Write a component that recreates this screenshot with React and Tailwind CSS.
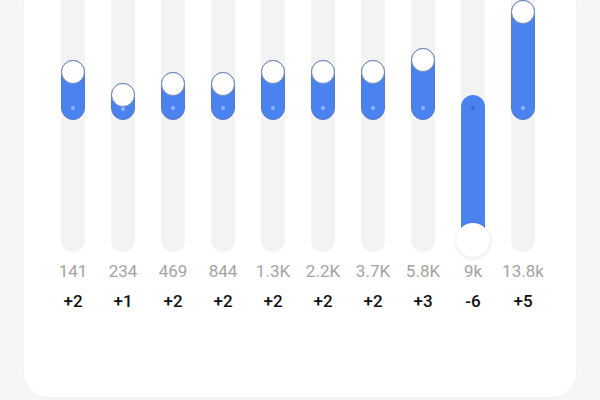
import React from "react";

const bands = [
  { f: "141", v: "+2", top: 60, bottom: 120 },
  { f: "234", v: "+1", top: 83, bottom: 120 },
  { f: "469", v: "+2", top: 72, bottom: 120 },
  { f: "844", v: "+2", top: 72, bottom: 120 },
  { f: "1.3K", v: "+2", top: 60, bottom: 120 },
  { f: "2.2K", v: "+2", top: 60, bottom: 120 },
  { f: "3.7K", v: "+2", top: 60, bottom: 120 },
  { f: "5.8K", v: "+3", top: 48, bottom: 120 },
  { f: "9k", v: "-6", top: 95, bottom: 246, neg: true },
  { f: "13.8k", v: "+5", top: 0, bottom: 120 },
];

function Slider({ b }) {
  return (
    <div className="w-[24px] h-[252px] rounded-b-full bg-[#f3f3f3] flex flex-col items-center">
      <div className="shrink-0" style={{ height: b.top }} />
      {b.neg ? (
        <>
          <div
            className="shrink-0 w-[24px] rounded-full bg-[#4a82f0] flex flex-col items-center pt-[11px]"
            style={{ height: b.bottom - b.top }}
          >
            <div className="w-[4px] h-[4px] rounded-full bg-[#3a6ad0]" />
          </div>
          <div className="shrink-0 -mt-[23px] w-[34px] h-[34px] rounded-full bg-white shadow-[0_1px_4px_rgba(0,0,0,0.12)]" />
        </>
      ) : (
        <div
          className="shrink-0 w-[24px] rounded-full bg-[#4a82f0] border border-[#5b79c2] flex flex-col items-center justify-between pb-[9px]"
          style={{ height: b.bottom - b.top }}
        >
          <div className="w-[24px] h-[24px] -mt-[1px] shrink-0 rounded-full bg-white border border-[#6f84b4]" />
          <div className="w-[4px] h-[4px] shrink-0 rounded-full bg-[#93b3f5]" />
        </div>
      )}
    </div>
  );
}

export default function App() {
  return (
    <div
      className="w-[600px] h-[400px] bg-[#f6f6f6] overflow-hidden"
      style={{ fontFamily: "Roboto, 'Noto Sans', sans-serif" }}
    >
      <div className="ml-[24px] w-[552px] h-[397px] bg-white rounded-b-[24px] shadow-[0_0_2px_rgba(0,0,0,0.05)] pl-[24px]">
        <div className="flex">
          {bands.map((b, i) => (
            <div key={i} className="w-[50px] flex flex-col items-center">
              <Slider b={b} />
              <div className="mt-[9px] text-[17px] leading-[20px] text-[#a3a3a3]">{b.f}</div>
              <div className="mt-[10px] text-[17px] leading-[20px] font-medium text-[#111]">{b.v}</div>
            </div>
          ))}
        </div>
      </div>
    </div>
  );
}
